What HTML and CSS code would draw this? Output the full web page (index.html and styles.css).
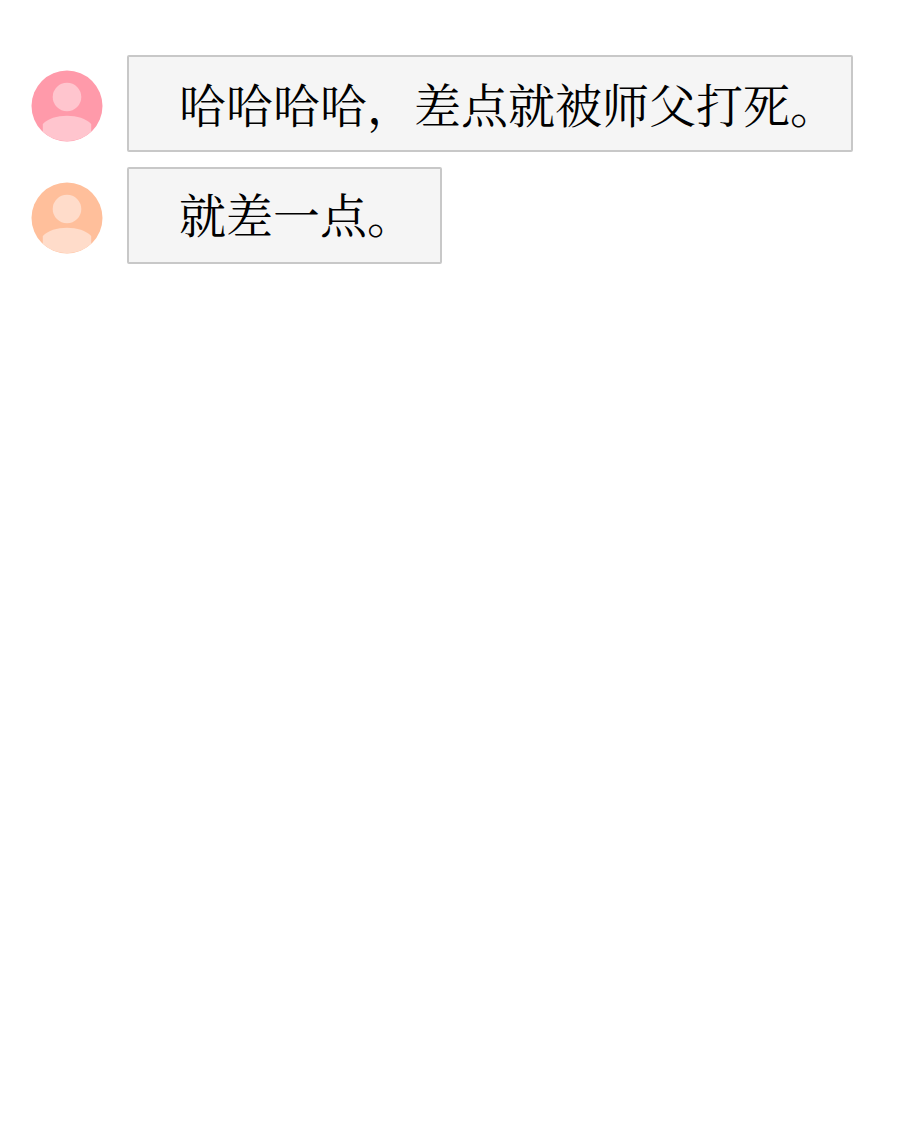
FILE: index.html
```
<!DOCTYPE html>
<html lang="zh-CN">
  <head>
    <meta charset="UTF-8">
    <meta name="viewport" content="width=device-width, initial-scale=1">
    <title>聊天</title>
    <link rel="stylesheet" href="styles.css">
  </head>
  <body>
    <ul class="chat_list">
      <li class="chat_item pink">
        <svg class="avatar" viewBox="0 0 72 72" aria-hidden="true">
          <circle class="bg" cx="36" cy="36" r="35.5"/>
          <circle class="fg" cx="36" cy="27" r="14.3"/>
          <path class="fg" d="M11.8 61.8V54C17 48.5 26 45.7 36 45.7S55 48.5 60.2 54V61.8A35.5 35.5 0 0 1 11.8 61.8Z"/>
        </svg>
        <p class="bubble">哈哈哈哈，差点就被师父打死。</p>
      </li>
      <li class="chat_item orange">
        <svg class="avatar" viewBox="0 0 72 72" aria-hidden="true">
          <circle class="bg" cx="36" cy="36" r="35.5"/>
          <circle class="fg" cx="36" cy="27" r="14.3"/>
          <path class="fg" d="M11.8 61.8V54C17 48.5 26 45.7 36 45.7S55 48.5 60.2 54V61.8A35.5 35.5 0 0 1 11.8 61.8Z"/>
        </svg>
        <p class="bubble short">就差一点。</p>
      </li>
    </ul>
  </body>
</html>
```
FILE: styles.css
```
* {padding: 0; margin: 0; box-sizing: border-box;}
body {background: #fff; color: #000; font-family: "Noto Serif CJK SC", "Noto Sans CJK SC", serif;}
.chat_list {display: flex; flex-direction: column; gap: 15px; padding: 55px 31px; list-style: none;}
.chat_item {display: flex; align-items: flex-start; gap: 24px;}
.avatar {flex: none; width: 72px; height: 72px; margin-top: 15px;}
.pink .bg {fill: #ff9aaa;}
.pink .fg {fill: #ffc5ce;}
.orange .bg {fill: #ffbf9b;}
.orange .fg {fill: #ffdcca;}
.bubble {padding: 14px 14px 15px 50px; background: #f5f5f5; border: 2px solid #c8c8c8; border-radius: 2px; font-size: 47px; font-weight: 400; line-height: 64px; white-space: nowrap;}
.bubble.short {padding: 12px 26px 17px 50px;}
```
